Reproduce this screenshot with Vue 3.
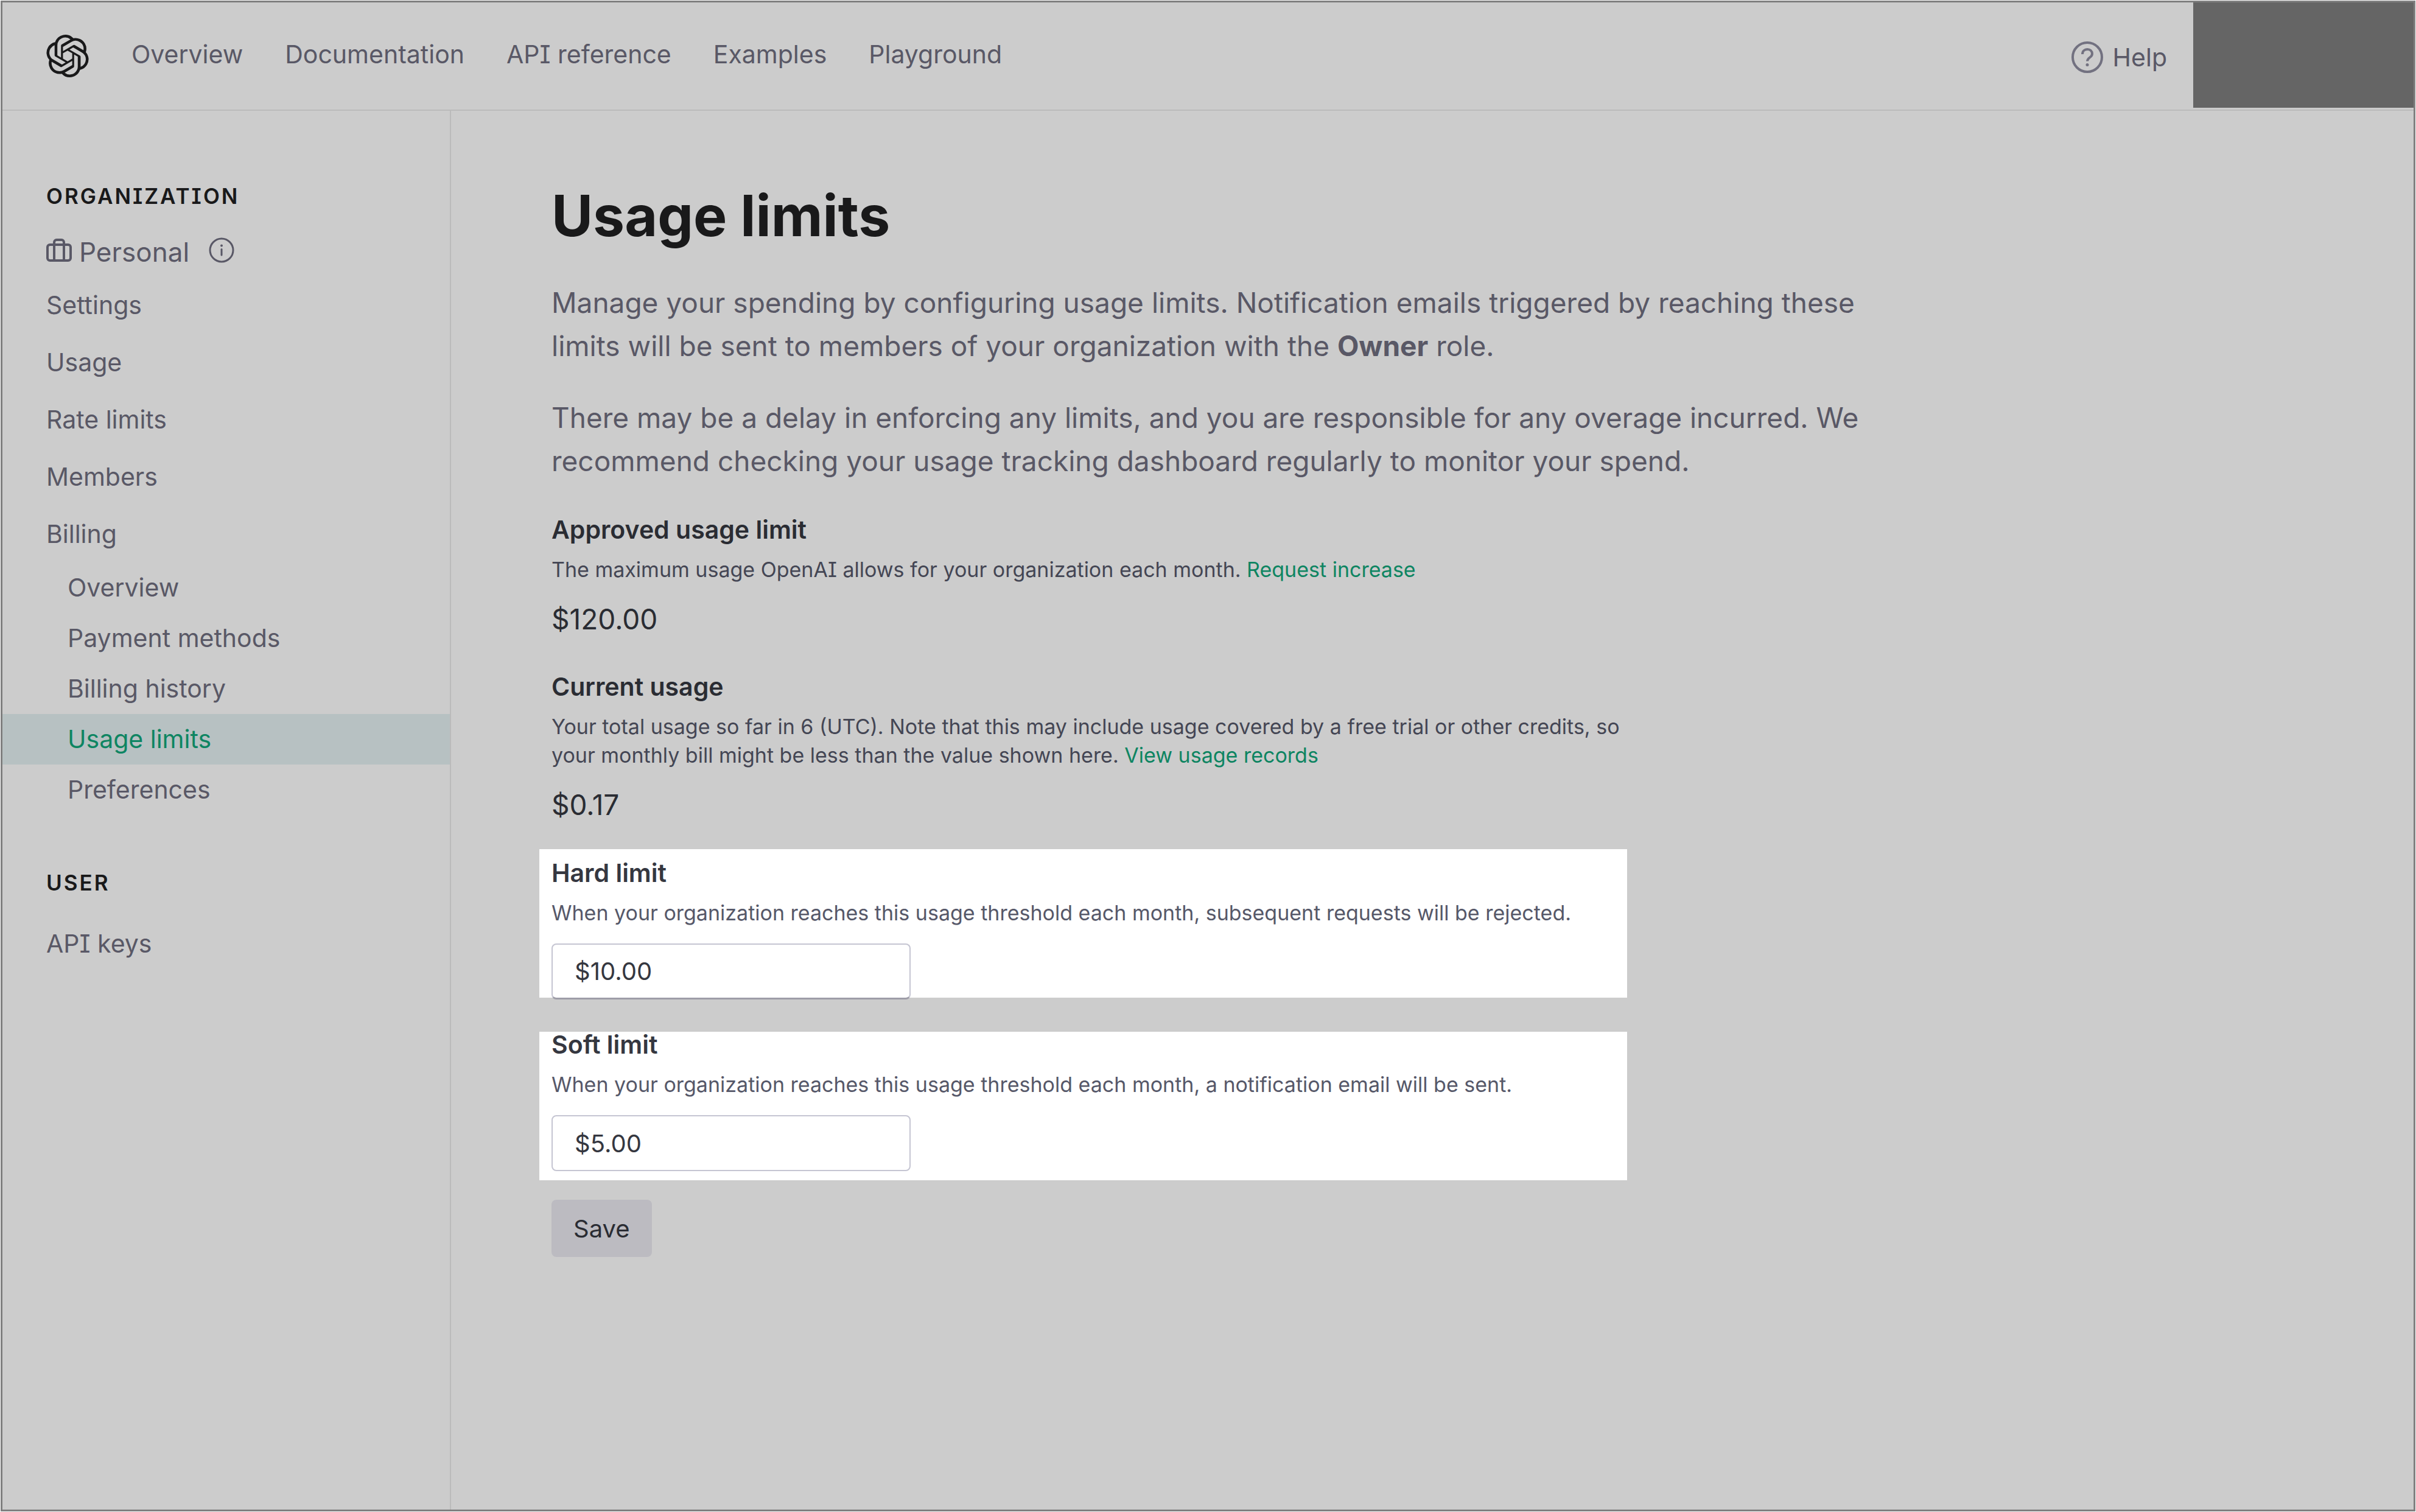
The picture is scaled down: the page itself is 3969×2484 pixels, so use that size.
<script setup>
import { ref } from 'vue'

const topLinks = ['Overview', 'Documentation', 'API reference', 'Examples', 'Playground']
const orgLinks = ['Settings', 'Usage', 'Rate limits', 'Members', 'Billing']
const billingLinks = ['Overview', 'Payment methods', 'Billing history', 'Usage limits', 'Preferences']
const activeLink = 'Usage limits'

const hardLimit = ref('$10.00')
const softLimit = ref('$5.00')
</script>

<template>
  <div class="page">
    <div class="frame">
      <header class="topbar">
        <a class="logo" href="#" aria-label="OpenAI">
          <svg viewBox="0 0 24 24" fill="currentColor" aria-hidden="true">
            <path d="M22.2819 9.8211a5.9847 5.9847 0 0 0-.5157-4.9108 6.0462 6.0462 0 0 0-6.5098-2.9A6.0651 6.0651 0 0 0 4.9807 4.1818a5.9847 5.9847 0 0 0-3.9977 2.9 6.0462 6.0462 0 0 0 .7427 7.0966 5.98 5.98 0 0 0 .511 4.9107 6.051 6.051 0 0 0 6.5146 2.9001A5.9847 5.9847 0 0 0 13.2599 24a6.0557 6.0557 0 0 0 5.7718-4.2058 5.9894 5.9894 0 0 0 3.9977-2.9001 6.0557 6.0557 0 0 0-.7475-7.0729zm-9.022 12.6081a4.4755 4.4755 0 0 1-2.8764-1.0408l.1419-.0804 4.7783-2.7582a.7948.7948 0 0 0 .3927-.6813v-6.7369l2.02 1.1686a.071.071 0 0 1 .038.052v5.5826a4.504 4.504 0 0 1-4.4945 4.4944zm-9.6607-4.1254a4.4708 4.4708 0 0 1-.5346-3.0137l.142.0852 4.783 2.7582a.7712.7712 0 0 0 .7806 0l5.8428-3.3685v2.3324a.0804.0804 0 0 1-.0332.0615L9.74 19.9502a4.4992 4.4992 0 0 1-6.1408-1.6464zM2.3408 7.8956a4.485 4.485 0 0 1 2.3655-1.9728V11.6a.7664.7664 0 0 0 .3879.6765l5.8144 3.3543-2.0201 1.1685a.0757.0757 0 0 1-.071 0l-4.8303-2.7865A4.504 4.504 0 0 1 2.3408 7.872zm16.5963 3.8558L13.1038 8.364 15.1192 7.2a.0757.0757 0 0 1 .071 0l4.8303 2.7913a4.4944 4.4944 0 0 1-.6765 8.1042v-5.6772a.79.79 0 0 0-.407-.667zm2.0107-3.0231l-.142-.0852-4.7735-2.7818a.7759.7759 0 0 0-.7854 0L9.409 9.2297V6.8974a.0662.0662 0 0 1 .0284-.0615l4.8303-2.7866a4.4992 4.4992 0 0 1 6.6802 4.66zM8.3065 12.863l-2.02-1.1638a.0804.0804 0 0 1-.038-.0567V6.0742a4.4992 4.4992 0 0 1 7.3757-3.4537l-.142.0805L8.704 5.459a.7948.7948 0 0 0-.3927.6813zm1.0976-2.3654l2.602-1.4998 2.6069 1.4998v2.9994l-2.5974 1.4997-2.6067-1.4997Z" />
          </svg>
        </a>
        <nav class="topnav" aria-label="Main">
          <a v-for="link in topLinks" :key="link" href="#">{{ link }}</a>
        </nav>
        <a class="help" href="#">
          <svg viewBox="0 0 52 52" fill="none" stroke="currentColor" aria-hidden="true">
            <circle cx="26" cy="26" r="24" stroke-width="4" />
            <path d="M18 21c0-5 3.500-8 8-8s8 3 8 7.500c0 6-8 6-8 12" stroke-width="4" />
            <circle cx="26" cy="38.500" r="2.500" fill="currentColor" stroke="none" />
          </svg>
          Help
        </a>
        <div class="account"></div>
      </header>

      <div class="body">
        <aside class="sidebar">
          <h2 class="group">Organization</h2>
          <div class="org">
            <svg class="case" viewBox="0 0 42 38" fill="none" stroke="currentColor" stroke-width="4" aria-hidden="true">
              <rect x="2" y="10" width="38" height="26" rx="4" />
              <path d="M13 36V6c0-2 1.500-4 4-4h8c2.500 0 4 2 4 4v30" />
            </svg>
            <span>Personal</span>
            <svg class="info" viewBox="0 0 42 42" fill="none" stroke="currentColor" stroke-width="3" aria-hidden="true">
              <circle cx="21" cy="21" r="19" />
              <path d="M21 19.500V29" stroke-linecap="round" />
              <circle cx="21" cy="13.500" r="2" fill="currentColor" stroke="none" />
            </svg>
          </div>
          <nav aria-label="Organization">
            <a v-for="link in orgLinks" :key="link" class="item" href="#">{{ link }}</a>
            <a
              v-for="link in billingLinks"
              :key="'billing-' + link"
              class="subitem"
              :class="{ active: link === activeLink }"
              href="#"
            >{{ link }}</a>
          </nav>
          <h2 class="group user">User</h2>
          <nav aria-label="User">
            <a class="item" href="#">API keys</a>
          </nav>
        </aside>

        <main class="content">
          <h1>Usage limits</h1>
          <div class="intro">
            <p>
              Manage your spending by configuring usage limits. Notification emails triggered by reaching these
              limits will be sent to members of your organization with the <strong>Owner</strong> role.
            </p>
            <p>
              There may be a delay in enforcing any limits, and you are responsible for any overage incurred. We
              recommend checking your usage tracking dashboard regularly to monitor your spend.
            </p>
          </div>

          <form class="form" @submit.prevent>
            <section class="stat">
              <h3>Approved usage limit</h3>
              <p class="desc">
                The maximum usage OpenAI allows for your organization each month.
                <a href="#">Request increase</a>
              </p>
              <p class="value">$120.00</p>
            </section>

            <section class="stat">
              <h3>Current usage</h3>
              <p class="desc">
                Your total usage so far in 6 (UTC). Note that this may include usage covered by a free trial or other credits, so
                your monthly bill might be less than the value shown here.
                <a href="#">View usage records</a>
              </p>
              <p class="value">$0.17</p>
            </section>

            <section class="limit hard">
              <label for="hard-limit">Hard limit</label>
              <p class="desc">When your organization reaches this usage threshold each month, subsequent requests will be rejected.</p>
              <input id="hard-limit" v-model="hardLimit" type="text" />
            </section>

            <section class="limit soft">
              <label for="soft-limit">Soft limit</label>
              <p class="desc">When your organization reaches this usage threshold each month, a notification email will be sent.</p>
              <input id="soft-limit" v-model="softLimit" type="text" />
            </section>

            <button class="save" type="submit">Save</button>
          </form>
        </main>
      </div>
    </div>
  </div>
</template>

<style>
body {
  margin: 0;
  background: #fff;
}
</style>

<style scoped>
.page {
  display: flex;
  box-sizing: border-box;
  min-height: 100vh;
  padding: 1px;
  font-family: Inter, "Liberation Sans", sans-serif;
  font-feature-settings: "cv08" 1;
  font-size: 41px;
  color: #595866;
}

.page * {
  box-sizing: border-box;
}

.frame {
  flex: 1;
  display: flex;
  flex-direction: column;
  border: 3px solid #7f7f7f;
  background: #ccc;
}

a {
  color: inherit;
  text-decoration: none;
}

h1,
h2,
h3,
p {
  margin: 0;
}

/* Top bar */
.topbar {
  display: flex;
  align-items: center;
  height: 178px;
  padding-left: 72px;
  border-bottom: 2px solid #bbb;
}

.logo {
  display: flex;
  color: #19191a;
}

.logo svg {
  width: 70px;
  height: 70px;
}

.topnav {
  flex: 1;
  display: flex;
  gap: 69px;
  padding: 0 0 6px 70px;
}

.help {
  display: flex;
  align-items: center;
  gap: 16px;
  padding-top: 4px;
  margin-right: 43px;
}

.help svg {
  width: 52px;
  height: 52px;
  color: #727180;
}

.account {
  align-self: flex-start;
  width: 362px;
  height: 173px;
  background: #656565;
}

/* Sidebar */
.body {
  flex: 1;
  display: flex;
}

.sidebar {
  flex: none;
  width: 737px;
  padding-top: 119px;
  border-right: 2px solid #bbb;
}

.group {
  padding-left: 72px;
  font-size: 35px;
  line-height: 42px;
  font-weight: 600;
  letter-spacing: 3px;
  text-transform: uppercase;
  color: #19191a;
}

.user {
  margin-top: 90px;
}

.org {
  display: flex;
  align-items: center;
  height: 80px;
  margin-top: 31px;
  padding-left: 72px;
  font-size: 44px;
}

.org svg {
  margin-bottom: 6px;
}

.case {
  width: 42px;
  height: 38px;
  margin-right: 12px;
}

.info {
  width: 42px;
  height: 42px;
  margin-left: 32px;
}

.item {
  display: block;
  padding-left: 72px;
  line-height: 94px;
}

.user + nav {
  margin-top: 32px;
}

.subitem {
  display: block;
  padding-left: 107px;
  line-height: 83px;
}

.active {
  background: #b7c1c2;
  color: #0e8562;
}

/* Content */
.content {
  flex: 1;
  padding: 116px 72px 116px 165px;
}

h1 {
  font-size: 93px;
  line-height: 112px;
  font-weight: 700;
  color: #19191a;
}

.intro {
  display: flex;
  flex-direction: column;
  gap: 47px;
  max-width: 2180px;
  margin-top: 52px;
  font-size: 46px;
  line-height: 71px;
}

.form {
  max-width: 1767px;
  margin-top: 56px;
}

.stat + .stat {
  margin-top: 62px;
}

h3,
label {
  display: block;
  font-size: 41px;
  line-height: 42px;
  font-weight: 600;
  color: #2a2c33;
}

.desc {
  margin-top: 21px;
  font-size: 34px;
  line-height: 47px;
  color: #444654;
}

.desc a {
  color: #0e8562;
}

.value {
  margin-top: 30px;
  font-size: 46px;
  line-height: 56px;
  color: #2a2c33;
}

.limit {
  display: flow-root;
  margin-left: -20px;
  padding-left: 20px;
  background: #fff;
}

.limit label {
  color: #353740;
}

.limit .desc {
  color: #565869;
}

.limit input {
  display: block;
  width: 590px;
  height: 92px;
  margin-top: 27px;
  padding: 0 36px;
  border: 2px solid #c5c5d2;
  border-radius: 8px;
  background: #fff;
  font: inherit;
  font-size: 40px;
  color: #353740;
}

.hard {
  margin-top: 45px;
  padding-top: 18px;
}

/* The field hangs slightly below its highlighted panel */
.hard input {
  margin-bottom: -3px;
  border-bottom: 3px solid #9e9da8;
}

.soft {
  margin-top: 56px;
  padding-bottom: 15px;
}

.save {
  display: block;
  height: 94px;
  margin-top: 32px;
  padding: 0 36px;
  border: 0;
  border-radius: 8px;
  background: #bcbbc1;
  font: inherit;
  font-size: 40px;
  color: #2a2c33;
}
</style>
